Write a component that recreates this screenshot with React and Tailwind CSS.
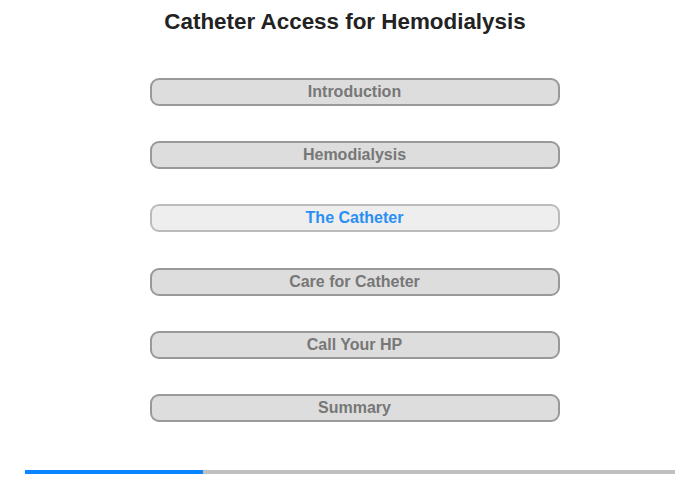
export default function App() {
  const items = ["Introduction", "Hemodialysis", "The Catheter", "Care for Catheter", "Call Your HP", "Summary"];
  return (
    <div className="w-[700px] h-[480px] bg-white flex flex-col items-center" style={{ fontFamily: '"Liberation Sans", Arial, sans-serif' }}>
      <h1 className="mt-[9px] h-[26px] leading-[26px] text-[22.4px] font-bold text-[#222] pr-[10px]">Catheter Access for Hemodialysis</h1>
      <div className="mt-[43px] ml-[9px] flex flex-col gap-[35.2px]">
        {items.map((t, i) =>
          i === 2 ? (
            <div key={t} className="w-[410px] h-[28px] rounded-[9px] border-2 border-[#bbbbbb] bg-[#eeeeee] flex items-center justify-center text-[16px] font-bold text-[#2a8ff5]">
              {t}
            </div>
          ) : (
            <div key={t} className="w-[410px] h-[28px] rounded-[9px] border-2 border-[#999999] bg-[#dddddd] flex items-center justify-center text-[16px] font-bold text-[#777777]">
              {t}
            </div>
          )
        )}
      </div>
      <div className="mt-auto mb-[6px] w-[650px] h-[4px] bg-[#c0c0c0] flex">
        <div className="w-[178px] h-full bg-[#0a84ff]" />
      </div>
    </div>
  );
}
